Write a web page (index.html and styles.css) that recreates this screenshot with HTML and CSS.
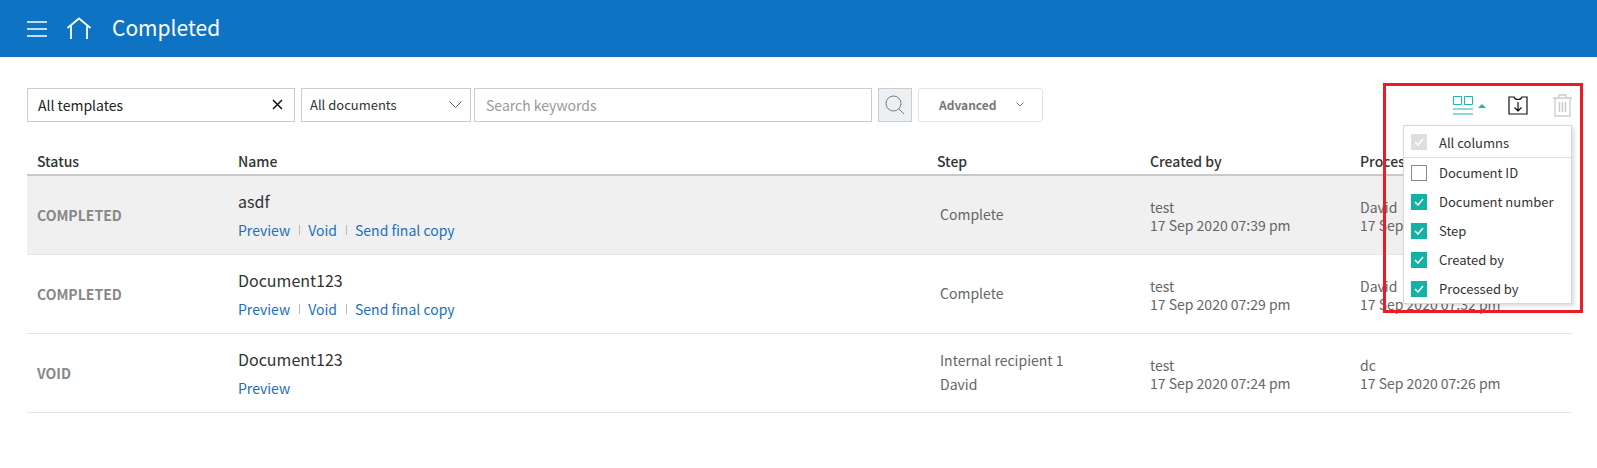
FILE: index.html
```html
<!DOCTYPE html>
<html>
<head>
  <meta charset="utf-8">
  <title>Completed</title>
  <link rel="stylesheet" href="styles.css">
</head>
<body>
<header class="topbar">
  <svg class="menu-icon" width="20" height="16" viewBox="0 0 20 16"><path d="M0 1h20M0 8h20M0 15h20" stroke="#fff" stroke-width="1.6" fill="none"/></svg>
  <svg class="home-icon" width="26" height="23" viewBox="0 0 26 23"><path d="M1.500 11L13 1.500 24.500 11M5 8v14M21 8v14" stroke="#fff" stroke-width="1.800" fill="none"/></svg>
  <h1>Completed</h1>
</header>

<main class="content">
  <div class="toolbar">
    <div class="field template-field"><span>All templates</span>
      <svg width="11" height="11" viewBox="0 0 11 11"><path d="M1 1l9 9M10 1l-9 9" stroke="#111" stroke-width="1.500" fill="none"/></svg>
    </div>
    <div class="field doc-field"><span>All documents</span>
      <svg width="13" height="7" viewBox="0 0 13 7"><path d="M.5.5l6 6 6-6" stroke="#666" fill="none"/></svg>
    </div>
    <div class="field search-field">Search keywords</div>
    <button class="search-btn" type="button">
      <svg width="20" height="20" viewBox="0 0 20 20"><circle cx="8.500" cy="8.500" r="7.500" stroke="#777" fill="none"/><path d="M14 14l5 5" stroke="#777" fill="none"/></svg>
    </button>
    <button class="advanced-btn" type="button"><span>Advanced</span>
      <svg width="8" height="5" viewBox="0 0 8 5"><path d="M.5.500L4 4 7.500.5" stroke="#777" fill="none"/></svg>
    </button>
    <div class="tools">
      <svg class="tool-columns" width="20" height="19" viewBox="0 0 20 19"><path d="M.5.5h8v8h-8zM11.500.5h8v8h-8z" stroke="#1fb5a8" fill="none"/><path d="M0 13h20M0 18h20" stroke="#1fb5a8" fill="none"/></svg>
      <span class="caret"></span>
      <svg class="tool-export" width="20" height="19" viewBox="0 0 20 19"><path d="M6 1H1v17h18V1h-5c0 0-1 2.500-4 2.500S6 1 6 1zM10 6v9M6.500 11.500L10 15l3.500-3.500" stroke="#111" stroke-width="1.200" fill="none"/></svg>
      <svg class="tool-trash" width="19" height="23" viewBox="0 0 19 23"><path d="M0 4h19M6 4V1h7v3M2 4v18h15V4" stroke="#ccc" stroke-width="1.300" fill="none"/><path d="M6.500 8v10M9.500 8v10M12.500 8v10" stroke="#ccc" stroke-width="1.500" fill="none"/></svg>
    </div>
  </div>

  <div class="row head">
    <div>Status</div><div>Name</div><div>Step</div><div>Created by</div><div>Processed by</div>
  </div>

  <div class="row item selected">
    <div class="status">COMPLETED</div>
    <div class="name-cell">
      <div class="doc-name">asdf</div>
      <div class="links"><a>Preview</a><i></i><a>Void</a><i></i><a>Send final copy</a></div>
    </div>
    <div class="step">Complete</div>
    <div class="who">test<br>17 Sep 2020 07:39 pm</div>
    <div class="who">David<br>17 Sep 2020 07:41 pm</div>
  </div>

  <div class="row item">
    <div class="status">COMPLETED</div>
    <div class="name-cell">
      <div class="doc-name">Document123</div>
      <div class="links"><a>Preview</a><i></i><a>Void</a><i></i><a>Send final copy</a></div>
    </div>
    <div class="step">Complete</div>
    <div class="who">test<br>17 Sep 2020 07:29 pm</div>
    <div class="who">David<br>17 Sep 2020 07:32 pm</div>
  </div>

  <div class="row item">
    <div class="status">VOID</div>
    <div class="name-cell">
      <div class="doc-name">Document123</div>
      <div class="links"><a>Preview</a></div>
    </div>
    <div class="step two-lines">Internal recipient 1<br>David</div>
    <div class="who">test<br>17 Sep 2020 07:24 pm</div>
    <div class="who">dc<br>17 Sep 2020 07:26 pm</div>
  </div>
</main>

<div class="columns-menu">
  <label class="all-row"><span class="check disabled"><svg width="10" height="8" viewBox="0 0 10 8"><path d="M1 4l3 3 5-6" stroke="#fff" stroke-width="1.500" fill="none"/></svg></span>All columns</label>
  <label><span class="check"></span>Document ID</label>
  <label><span class="check on"><svg width="10" height="8" viewBox="0 0 10 8"><path d="M1 4l3 3 5-6" stroke="#fff" stroke-width="1.500" fill="none"/></svg></span>Document number</label>
  <label><span class="check on"><svg width="10" height="8" viewBox="0 0 10 8"><path d="M1 4l3 3 5-6" stroke="#fff" stroke-width="1.500" fill="none"/></svg></span>Step</label>
  <label><span class="check on"><svg width="10" height="8" viewBox="0 0 10 8"><path d="M1 4l3 3 5-6" stroke="#fff" stroke-width="1.500" fill="none"/></svg></span>Created by</label>
  <label><span class="check on"><svg width="10" height="8" viewBox="0 0 10 8"><path d="M1 4l3 3 5-6" stroke="#fff" stroke-width="1.500" fill="none"/></svg></span>Processed by</label>
</div>
<div class="red-box"></div>
</body>
</html>
```

FILE: styles.css
```css
* {
  box-sizing: border-box;
}
body {
  margin: 0;
  height: 468px;
  overflow: hidden;
  position: relative;
  background: #fff;
  font-family: "Noto Sans CJK KR", "Noto Sans", sans-serif;
  font-size: 14px;
  color: #333;
}

.topbar {
  height: 57px;
  background: #0f73c4;
  display: flex;
  align-items: center;
  padding-left: 27px;
}
.topbar h1 {
  margin: 0 0 0 20px;
  padding-bottom: 3px;
  font-size: 21px;
  font-weight: 400;
  color: #fff;
}
.home-icon {
  margin-left: 19px;
}

.content {
  padding: 31px 25px 0 27px;
}
.toolbar {
  display: flex;
  align-items: center;
  height: 34px;
}
.field {
  height: 34px;
  padding-bottom: 1px;
  border: 1px solid #ccc;
  display: flex;
  align-items: center;
  justify-content: space-between;
  background: #fff;
}
.template-field {
  width: 268px;
  padding: 0 11px 1px 10px;
  color: #222;
  margin-right: 6px;
}
.doc-field {
  width: 170px;
  padding: 0 8px 1px 8px;
  margin-right: 3px;
  font-size: 13px;
}
.search-field {
  width: 398px;
  padding: 0 11px 1px;
  color: #999;
}
.search-btn {
  width: 34px;
  height: 34px;
  margin-left: 6px;
  padding: 0;
  border: 1px solid #ccc;
  background: #edf0f2;
  display: flex;
  align-items: center;
  justify-content: center;
}
.advanced-btn {
  width: 125px;
  height: 34px;
  margin-left: 6px;
  padding: 0 0 2px 20px;
  border: 1px solid #e2e2e2;
  border-radius: 3px;
  background: #fff;
  font: 700 12px "Noto Sans CJK KR", sans-serif;
  color: #777;
  display: flex;
  align-items: center;
}
.advanced-btn svg {
  margin-left: 19px;
}
.tools {
  margin-left: auto;
  display: flex;
  align-items: center;
}
.caret {
  width: 0;
  height: 0;
  margin-left: 5px;
  margin-top: 1px;
  border: 4px solid transparent;
  border-top: 0;
  border-bottom: 4px solid #1fb5a8;
}
.tool-export {
  margin-left: 22px;
}
.tool-trash {
  margin-left: 25px;
}

.row {
  display: grid;
  grid-template-columns: 201px 699px 213px 210px 1fr;
  padding-left: 10px;
}
.head {
  margin-top: 21px;
  height: 33px;
  padding-top: 5px;
  align-items: center;
  border-bottom: 2px solid #c8c8c8;
  font-weight: 500;
  color: #333;
}
.item {
  height: 79px;
  align-items: center;
  border-bottom: 1px solid #e6e6e6;
}
.selected {
  background: #f0f0f0;
}
.status {
  font-weight: 700;
  font-size: 14px;
  color: #888;
}
.name-cell {
  padding-bottom: 2px;
}
.doc-name {
  font-size: 16px;
  color: #333;
  line-height: 24px;
  margin-bottom: 7px;
}
.links {
  display: flex;
  align-items: center;
  line-height: 20px;
}
.links a {
  color: #1a6fc0;
}
.links i {
  width: 1px;
  height: 10px;
  background: #bbb;
  margin: 0 8.500px;
}
.step {
  padding-left: 3px;
  padding-bottom: 2px;
  color: #666;
}
.two-lines {
  line-height: 24px;
}
.who {
  padding-top: 2px;
  color: #666;
  line-height: 18px;
}

.columns-menu {
  position: absolute;
  left: 1403px;
  top: 125px;
  width: 169px;
  height: 179px;
  background: #fff;
  border: 1px solid #d8d8d8;
  box-shadow: 2px 2px 4px rgba(0, 0, 0, .15);
  display: flex;
  flex-direction: column;
  font-size: 13px;
  color: #333;
}
.columns-menu label {
  height: 29px;
  display: flex;
  align-items: center;
  padding-left: 7px;
}
.columns-menu .all-row {
  height: 32px;
  padding-top: 1px;
  border-bottom: 1px solid #ddd;
}
.check {
  width: 16px;
  height: 16px;
  margin-right: 12px;
  border: 1px solid #888;
  display: flex;
  align-items: center;
  justify-content: center;
}
.check.on {
  background: #14b2a4;
  border-color: #14b2a4;
}
.check.disabled {
  background: #dedede;
  border-color: #dedede;
}
.red-box {
  position: absolute;
  left: 1383px;
  top: 83px;
  width: 200px;
  height: 230px;
  border: 3px solid #ed1c24;
}
```
